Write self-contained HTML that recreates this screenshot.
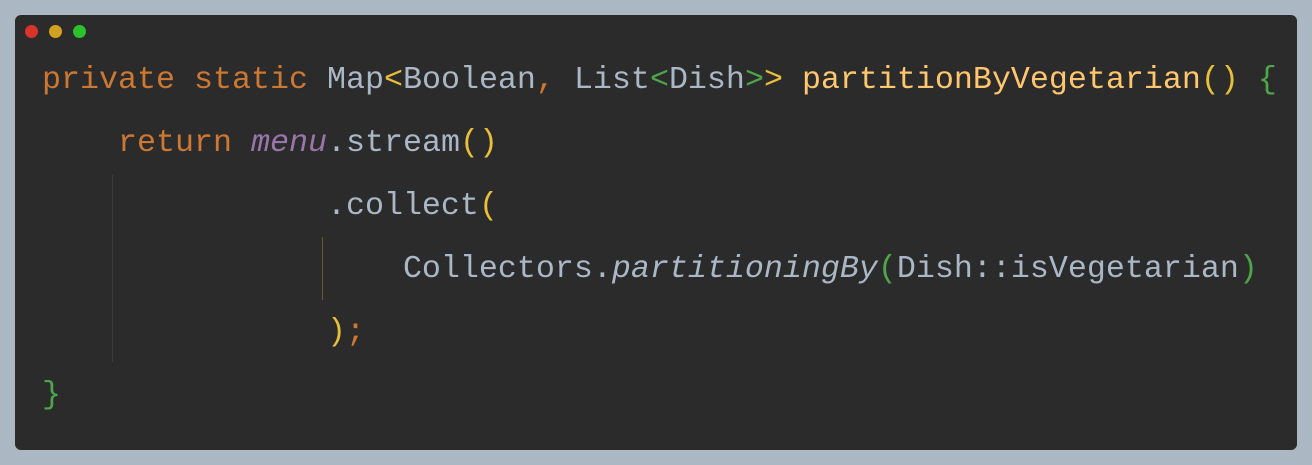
<!DOCTYPE html>
<html><head><meta charset="utf-8"><style>
html,body{margin:0;padding:0;}
body{width:1312px;height:465px;background:#abb8c3;position:relative;overflow:hidden;}
.card{position:absolute;left:15px;top:15px;width:1282px;height:435px;background:#2b2b2b;border-radius:6px;}
.dot{position:absolute;top:10px;width:13px;height:13px;border-radius:50%;}
pre{position:absolute;left:27px;top:34px;margin:0;font-family:"Liberation Mono",monospace;font-size:31.67px;line-height:63px;color:#a9b7c6;}
.k{color:#cc7832}.y{color:#ffc66d}.b{color:#e8bf3a}.g{color:#4ea64a}.p{color:#9876aa;font-style:italic}.i{font-style:italic}
.guide{position:absolute;width:1px;}
</style></head><body>
<div class="card">
<div class="dot" style="left:10px;background:#d9332a"></div>
<div class="dot" style="left:34px;background:#d4a020"></div>
<div class="dot" style="left:58px;background:#2bc22b"></div>
<div class="guide" style="left:97px;top:160px;height:187px;background:#3c3c3c"></div>
<div class="guide" style="left:307px;top:222px;height:63px;background:#6b5a2a"></div>
<pre><span class="k">private static </span>Map<span class="b">&lt;</span>Boolean<span class="k">, </span>List<span class="g">&lt;</span>Dish<span class="g">&gt;</span><span class="b">&gt;</span> <span class="y">partitionByVegetarian</span><span class="b">()</span> <span class="g">{</span>
    <span class="k">return </span><span class="p">menu</span>.stream<span class="b">()</span>
               .collect<span class="b">(</span>
                   Collectors.<span class="i">partitioningBy</span><span class="g">(</span>Dish::isVegetarian<span class="g">)</span>
               <span class="b">)</span><span class="k">;</span>
<span class="g">}</span></pre>
</div>
</body></html>
